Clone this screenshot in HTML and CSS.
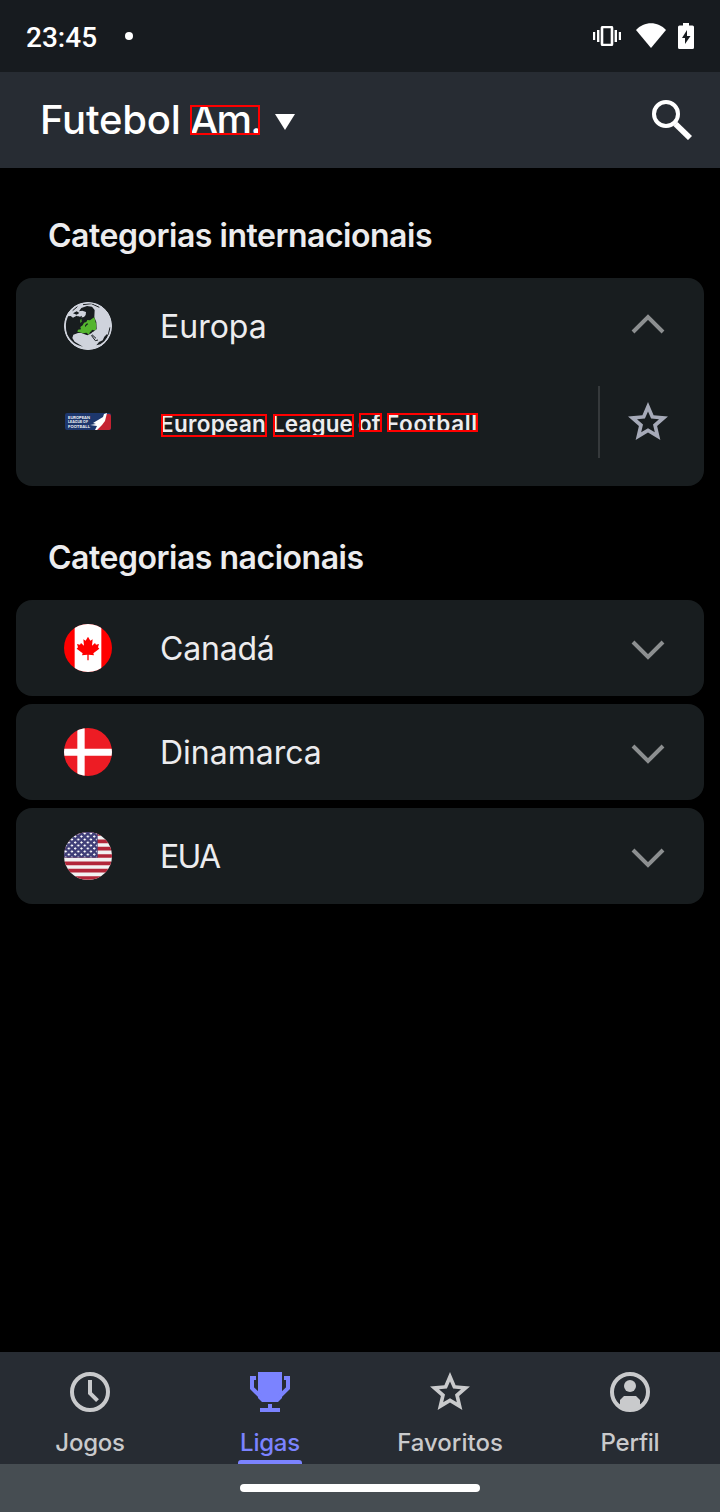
FILE: index.html
```html
<!DOCTYPE html>
<html lang="pt">
<head>
<meta charset="utf-8">
<title>Futebol Am.</title>
<link rel="stylesheet" href="styles.css">
</head>
<body>
<div class="app">
  <div class="status">
    <span class="time">23:45</span><span class="dot"></span>
    <svg class="vibrate" width="28" height="20" viewBox="0 0 28 20" fill="none" stroke="#fff"><rect x="9" y="1" width="10" height="18" rx="1" stroke-width="2.6"/><path d="M1 6v8M5.200 4v12M22.800 4v12M27 6v8" stroke-width="2.400"/></svg>
    <svg class="wifi" width="30" height="25" viewBox="0 0 30 25"><path d="M0 7C8-2 22-2 30 7L15 25Z" fill="#fff"/></svg>
    <svg class="battery" width="16" height="26" viewBox="0 0 16 26"><path d="M5 0h6v2.500h3.500q1.500 0 1.500 1.500v20.500q0 1.500-1.500 1.500h-13q-1.500 0-1.500-1.500v-20.500q0-1.500 1.500-1.500h3.500z" fill="#fff"/><path d="M9 7v6h3.500L7 21v-6H4z" fill="#171b1f"/></svg>
  </div>
  <header class="header">
    <h1 class="title"><span class="futebol">Futebol</span><span class="mark am">Am.</span></h1>
    <svg class="caret" width="20" height="16" viewBox="0 0 20 16"><path d="M0 0H20L10 16Z" fill="#fff"/></svg>
    <svg class="search" width="40" height="40" viewBox="0 0 40 40" fill="none" stroke="#fff"><circle cx="14" cy="14" r="12" stroke-width="4"/><path d="M23.500 24L38 38" stroke-width="5.800"/></svg>
  </header>
  <main class="main">
    <h2 class="heading intl">Categorias internacionais</h2>
    <section class="card">
      <div class="row">
        <svg class="flag" viewBox="0 0 144 144"><circle cx="72" cy="72" r="72" fill="#cfd3dc"/><path d="M12 43L20 42 27 47 38 41 48 47 60 45 65 39 66 30 55 26 45 28 52 18 69 12 84 14 92 24 91 46 97 60 98 82 88 88 82 94 70 100 52 93 42 93 28 98 25 108 32 119 57 134Q24 127 10 98 0 69 12 43Z" fill="#181d1f"/><path d="M27 34L38 28 46 33 38 38ZM40 42L48 44 54 41 52 50 44 49Z" fill="#181d1f"/><path d="M40 89L42 83 51 82 49 75 56 70 60 62 67 60 70 54 78 55 84 50 91 46 94 58 97 68 96 84 86 86 78 90 75 98 67 92 58 94Z" fill="#54b52e"/><path d="M49 54L52 50 53 59 49 63Z" fill="#54b52e"/><path d="M63 70L69 64 73 66 68 70 64 76ZM80 88L86 83 92 86 86 90Z" fill="#181d1f"/><path d="M57 8L82 5 106 16M26 26L40 14M82 100L94 116 102 114M84 98L96 109M138 76Q136 98 124 110" fill="none" stroke="#181d1f" stroke-width="3"/><path d="M97 130L105 120 116 115 121 104 129 96 130 105 121 118 109 127Z" fill="#181d1f"/><circle cx="72" cy="72" r="70" fill="none" stroke="#cfd3dc" stroke-width="4"/></svg>
        <span class="name europa">Europa</span>
        <svg class="chev up" width="34" height="22" viewBox="0 0 34 22"><path d="M2 19L17 4 32 19" fill="none" stroke="#8c8f90" stroke-width="4"/></svg>
      </div>
      <div class="league">
        <svg class="logo" width="48" height="18" viewBox="0 0 48 18"><rect x="1" width="46" height="17" rx="2" fill="#1d376d"/><path d="M43 1h2q2 0 2 2v12q0 2-2 2H33L37 11 40 6Z" fill="#c52231"/><path d="M39 4L40 1 43 0 42 4 41 8 38 12 33 17H31L33 13 26 12 32 11 29 10 34 7Z" fill="#fff"/><g fill="#fff" font-family="Inter" font-size="3.700" font-weight="600"><text x="4" y="5.500" textLength="22" lengthAdjust="spacingAndGlyphs">EUROPEAN</text><text x="4" y="10.300" textLength="20" lengthAdjust="spacingAndGlyphs">LEAGUE OF</text><text x="4" y="15" textLength="22" lengthAdjust="spacingAndGlyphs">FOOTBALL</text></g></svg>
        <div class="league-name"><span class="mark w1">European</span><span class="mark w2">League</span><span class="mark w3">of</span><span class="mark w4">Football</span></div>
        <div class="favorite"><svg width="40" height="40" viewBox="2 2 20 20"><path fill="#a6aab8" d="M22 9.240l-7.190-.62L12 2 9.190 8.630 2 9.240l5.460 4.730L5.820 21 12 17.270 18.180 21l-1.630-7.030L22 9.240zM12 15.100l-3.400 2.050.9-3.900-3-2.600 3.950-.35L12 6.700l1.550 3.600 3.950.35-3 2.600.9 3.900L12 15.100z"/></svg></div>
      </div>
    </section>
    <h2 class="heading nat">Categorias nacionais</h2>
    <section class="list">
      <div class="card row">
        <svg class="flag" viewBox="0 0 144 144"><path d="M0 0H144V144H0Z" fill="#f00"/><path d="M32 0H112V144H32Z" fill="#fff"/><path d="M72 38L79 50 86 46 84 65 93 57 96 62 105 60 102 70 106 74 88 88 90 94 74 92V109H70V92L54 94 56 88 38 74 42 70 39 60 48 62 51 57 60 65 58 46 65 50Z" fill="#f00"/></svg>
        <span class="name canada">Canadá</span>
        <svg class="chev" width="34" height="22" viewBox="0 0 34 22"><path d="M2 3L17 18 32 3" fill="none" stroke="#8c8f90" stroke-width="4"/></svg>
      </div>
      <div class="card row">
        <svg class="flag" viewBox="0 0 144 144"><path d="M0 0H144V144H0Z" fill="#ed1c24"/><path d="M40 0H62V62H144V83H62V144H40V83H0V62H40Z" fill="#fff"/></svg>
        <span class="name dinamarca">Dinamarca</span>
        <svg class="chev" width="34" height="22" viewBox="0 0 34 22"><path d="M2 3L17 18 32 3" fill="none" stroke="#8c8f90" stroke-width="4"/></svg>
      </div>
      <div class="card row">
        <svg class="flag" viewBox="0 0 144 144"><defs><pattern id="stars" width="19" height="18" patternUnits="userSpaceOnUse"><path d="M5 1v7M1.500 4.500h7M14.500 10v7M11 13.500h7" stroke="#fff" stroke-width="2.800"/></pattern></defs><path fill="#f2f2f2" d="M0 0H144V144H0Z"/><path d="M0 6H144M0 28H144M0 50H144M0 72H144M0 94H144M0 116H144M0 138H144" stroke="#b22639" stroke-width="11"/><path fill="#403f78" d="M0 0H101V77H0Z"/><path fill="url(#stars)" d="M0 2H99V76H0Z"/></svg>
        <span class="name eua">EUA</span>
        <svg class="chev" width="34" height="22" viewBox="0 0 34 22"><path d="M2 3L17 18 32 3" fill="none" stroke="#8c8f90" stroke-width="4"/></svg>
      </div>
    </section>
  </main>
  <nav class="nav">
    <div class="tab"><svg width="40" height="40" viewBox="0 0 40 40" fill="none" stroke="#c9cacc" stroke-width="4"><circle cx="20" cy="20" r="18"/><path d="M20 8v13.200l7.500 7.500"/></svg><span class="jogos">Jogos</span></div>
    <div class="tab active"><svg width="40" height="40" viewBox="0 0 40 40" fill="#7b83ff"><path d="M8 0H32V26L28 30H12L8 26ZM18 32h4v4h8v4H10v-4h8z"/><path d="M6 6H2v10.200L10 24M34 6h4v10.200L30 24" fill="none" stroke="#7b83ff" stroke-width="4"/></svg><span class="ligas">Ligas</span></div>
    <div class="tab"><svg width="40" height="40" viewBox="2 2 20 20"><path fill="#c9cacc" d="M22 9.240l-7.190-.62L12 2 9.190 8.630 2 9.240l5.460 4.730L5.820 21 12 17.270 18.180 21l-1.630-7.030L22 9.240zM12 15.100l-3.400 2.050.9-3.900-3-2.600 3.950-.35L12 6.700l1.550 3.600 3.950.35-3 2.600.9 3.900L12 15.100z"/></svg><span class="favoritos">Favoritos</span></div>
    <div class="tab"><svg width="40" height="40" viewBox="0 0 40 40" fill="#c9cacc"><circle cx="20" cy="20" r="18" fill="none" stroke="#c9cacc" stroke-width="4"/><circle cx="20" cy="14" r="6"/><path d="M10 28L14 24H26L30 28V36Q20 41 10 36Z"/></svg><span class="perfil">Perfil</span></div>
  </nav>
  <div class="gesture"><div class="pill"></div></div>
</div>
</body>
</html>
```
FILE: styles.css
```css
* { box-sizing: border-box; }
body { margin: 0; background: #000; font-family: Inter, Roboto, sans-serif; color: #ececee; }
svg { display: block; flex: none; }
h1, h2 { margin: 0; white-space: nowrap; }
.app { width: 720px; height: 1512px; display: flex; flex-direction: column; }

.status { height: 72px; background: #171b1f; display: flex; align-items: center; padding: 0 26px; flex: none; }
.time { font: 500 28px/34px Roboto, sans-serif; color: #fff; width: 72px; margin-top: 3px; }
.dot { width: 8px; height: 8px; border-radius: 50%; background: #fff; margin-left: 27px; }
.vibrate { margin-left: auto; }
.wifi { margin-left: 15px; margin-top: -1px; }
.battery { margin-left: 12px; }

.header { height: 96px; background: #272c33; display: flex; align-items: center; padding: 0 28px 0 40px; flex: none; }
.title { display: flex; width: 220px; font-size: 40px; line-height: 48px; font-weight: 500; color: #fff; align-items: center; letter-spacing: -0.2px; }
.futebol { width: 150px; }
.mark { display: block; position: relative; white-space: nowrap; }
.mark::after { content: ""; position: absolute; inset: 0; border: 2px solid #f00; }
.am { width: 70px; height: 30px; line-height: 30px; letter-spacing: -1.8px; }
.caret { margin: 4px 0 0 15px; }
.search { margin-left: auto; }

.main { flex: 1; padding: 0 16px; }
.heading { font-size: 32px; line-height: 40px; font-weight: 600; padding-left: 32px; letter-spacing: -0.48px; }
.intl { margin-top: 48px; }
.nat { margin-top: 52px; }
.card { background: #181d1f; border-radius: 16px; }
.intl + .card { margin-top: 22px; height: 208px; }
.row { height: 96px; display: flex; align-items: center; padding: 0 39px 0 48px; }
.flag { width: 48px; height: 48px; border-radius: 50%; }
.name { font-size: 32px; line-height: 40px; margin: 1px 0 0 48px; }
.canada { letter-spacing: -0.2px; }
.eua { letter-spacing: -1.7px; }
.chev { margin-left: auto; margin-top: 4px; }
.up { margin-top: -4px; }
.league { height: 96px; display: flex; align-items: center; padding-left: 48px; }
.league-name { display: flex; width: 317px; height: 24px; margin: 6px 0 0 49px; font-size: 22.5px; font-weight: 600; }
.w1 { width: 106px; height: 23px; line-height: 19px; margin-top: 1px; letter-spacing: 0.3px; text-indent: -1px; }
.w2 { width: 81px; height: 23px; line-height: 19px; margin: 1px 0 0 6px; letter-spacing: 0.1px; text-indent: -1px; }
.w3 { width: 23px; height: 19px; line-height: 21px; margin-left: 5px; text-indent: -1px; }
.w4 { width: 91px; height: 19px; line-height: 21px; margin-left: 5px; letter-spacing: 0.6px; text-indent: -1px; }
.favorite { margin-left: auto; width: 106px; height: 72px; border-left: 2px solid #35393b; padding: 16px 28px; }
.list { display: flex; flex-direction: column; gap: 8px; margin-top: 22px; }

.nav { height: 112px; background: #272c33; display: grid; grid-template-columns: repeat(4, 1fr); flex: none; }
.tab { display: flex; flex-direction: column; align-items: center; padding-top: 20px; font-size: 24px; line-height: 28px; font-weight: 500; color: #c9cacc; }
.tab span { margin-top: 17px; }
.jogos, .ligas, .perfil { letter-spacing: -0.25px; }
.active { color: #7b83ff; }
.active::after { content: ""; width: 64px; height: 4px; margin-top: 3px; background: #7b83ff; border-radius: 3px 3px 0 0; }
.gesture { height: 48px; background: #464d52; display: flex; justify-content: center; align-items: center; flex: none; }
.pill { width: 240px; height: 8px; border-radius: 4px; background: #fff; }
```
